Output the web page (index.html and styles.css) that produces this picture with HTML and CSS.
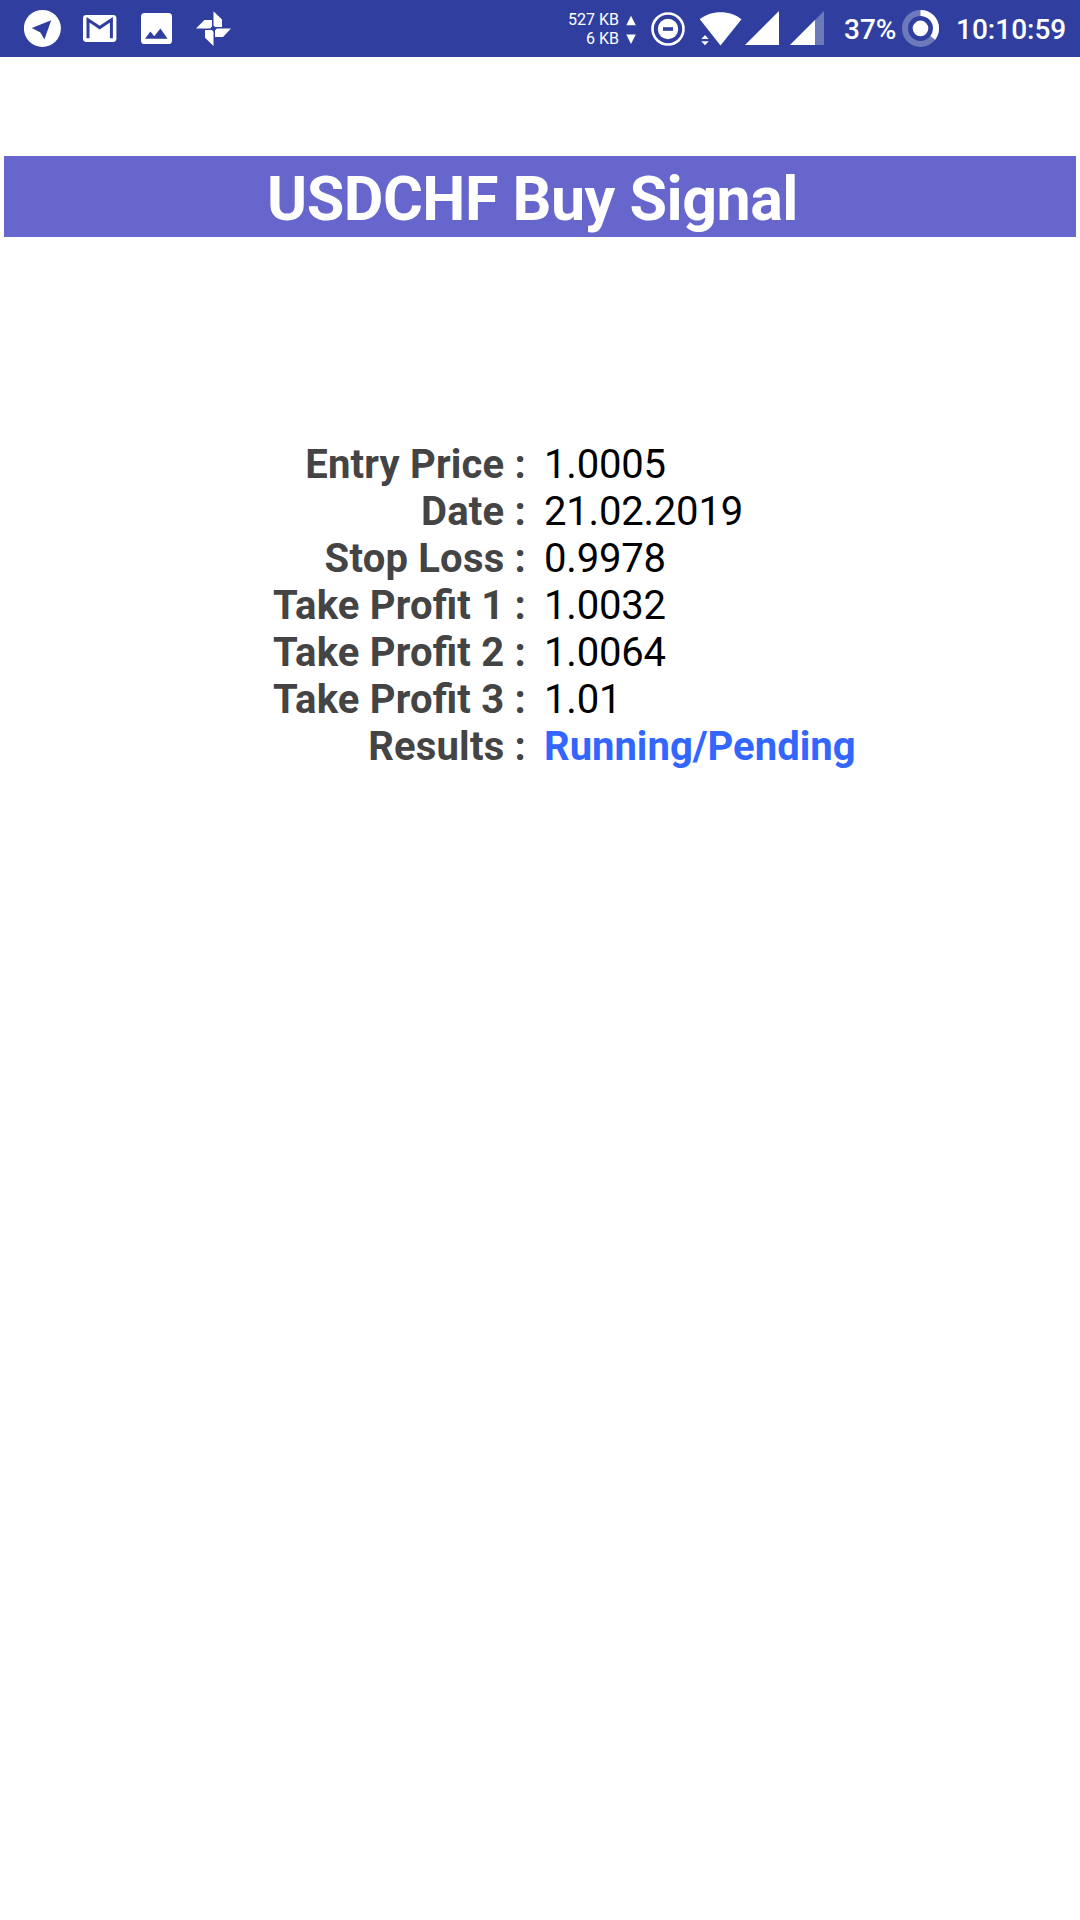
FILE: index.html
```html
<!DOCTYPE html>
<html lang="en">
<head>
    <meta charset="UTF-8">
    <title>USDCHF Buy Signal</title>
    <link rel="stylesheet" href="styles.css">
</head>
<body>
<div class="status-bar">
    <div class="notifications">
        <svg width="38" height="57" viewBox="24 0 38 57">
            <circle cx="42.4" cy="28.4" r="18.5" fill="#fff"/>
            <path d="M31.8 28L51.2 20.3L44.4 39.6L40.4 32.6Z" fill="#303f9f"/>
        </svg>
        <svg width="34" height="57" viewBox="83 0 34 57">
            <rect x="83" y="15" width="33.4" height="27" rx="3.4" fill="#fff"/>
            <path d="M88 38.3V19.8L99.7 27.6L111.4 19.8V38.3" fill="none" stroke="#303f9f" stroke-width="3"/>
        </svg>
        <svg width="31" height="57" viewBox="141 0 31 57">
            <rect x="141" y="13" width="31" height="31" rx="3.6" fill="#fff"/>
            <path d="M145 38.7L150.4 31.6L154.2 36.2L160.4 28.4L167.6 38.7Z" fill="#303f9f"/>
        </svg>
        <svg width="36" height="57" viewBox="196 0 36 57">
            <path d="M213.5 11.3L222 19.5V27H215.2L213.5 25.5ZM231 28.4L223 37H215V30.4L216.8 28.4ZM213.5 46L205 37.7V30H211.7L213.5 31.8ZM196 28.4L204.3 20H212V26.5L210.2 28.4Z" fill="#fff"/>
        </svg>
    </div>
    <div class="indicators">
        <div class="speed">
            <div>527 KB</div>
            <div>6 KB</div>
        </div>
        <svg class="speed-arrows" width="10" height="57" viewBox="626 0 10 57">
            <path d="M626.3 25.2L631 15.8L635.8 25.2ZM626.3 34.6H635.8L631 44Z" fill="#fff"/>
        </svg>
        <svg class="dnd" width="34" height="57" viewBox="651 0 34 57">
            <circle cx="668" cy="29" r="15.5" fill="none" stroke="#fff" stroke-width="2.6"/>
            <circle cx="668" cy="29" r="10.2" fill="#fff"/>
            <path d="M663 27.2H673V30.8H663Z" fill="#303f9f"/>
        </svg>
        <svg class="wifi" width="42" height="57" viewBox="700 0 42 57">
            <path d="M720.5 45.5L699.8 19.2C705.5 14.7 712.5 12.2 720.5 12.2S735.8 14.7 741.5 19.2Z" fill="#fff"/>
            <path d="M701.3 39L705 35L708.7 39ZM701.3 41.2H708.7L705 45.2Z" fill="#fff"/>
        </svg>
        <svg class="signal-one" width="34" height="57" viewBox="745 0 34 57">
            <path d="M745 45L779 11V45Z" fill="#fff"/>
        </svg>
        <svg class="signal-two" width="34" height="57" viewBox="790 0 34 57">
            <path d="M790 45L824 11V45Z" fill="#fff" fill-opacity=".3"/>
            <path d="M790 45L815 20V45Z" fill="#fff"/>
        </svg>
        <div class="percent">37%</div>
        <svg class="battery" width="38" height="57" viewBox="902 0 38 57">
            <circle cx="920.5" cy="28.4" r="15.5" fill="none" stroke="#fff" stroke-opacity=".3" stroke-width="6"/>
            <circle cx="920.5" cy="28.4" r="15.5" fill="none" stroke="#fff" stroke-width="6" pathLength="100" stroke-dasharray="35.5 100" transform="rotate(-90 920.5 28.4)"/>
            <circle cx="920.5" cy="28.4" r="7.8" fill="#fff"/>
        </svg>
        <div class="clock">10:10:59</div>
    </div>
</div>

<h1 class="title">USDCHF Buy Signal</h1>

<dl class="signal">
    <dt>Entry Price :</dt><dd>1.0005</dd>
    <dt>Date :</dt><dd>21.02.2019</dd>
    <dt>Stop Loss :</dt><dd>0.9978</dd>
    <dt>Take Profit 1 :</dt><dd>1.0032</dd>
    <dt>Take Profit 2 :</dt><dd>1.0064</dd>
    <dt>Take Profit 3 :</dt><dd>1.01</dd>
    <dt>Results :</dt><dd class="pending">Running/Pending</dd>
</dl>
</body>
</html>
```

FILE: styles.css
```css
*{
    margin:0;
    padding:0;
    box-sizing:border-box;
}
body{
    background:#fff;
    font-family:Roboto, sans-serif;
}
svg{
    display:block;
    flex:none;
}
.status-bar{
    display:flex;
    justify-content:space-between;
    height:57px;
    padding:0 14px 0 24px;
    background:#303f9f;
    color:#fff;
}
.notifications{
    display:flex;
    gap:24px;
}
.notifications svg:nth-child(2){
    margin-left:-3px;
}
.indicators{
    display:flex;
    align-items:center;
    white-space:nowrap;
}
.speed{
    padding-top:1px;
    font-size:16px;
    line-height:19px;
    text-align:right;
}
.speed-arrows{
    margin-left:7px;
}
.dnd{
    margin-left:15px;
}
.wifi{
    margin-left:15px;
}
.signal-one{
    margin-left:3px;
}
.signal-two{
    margin-left:11px;
}
.percent{
    width:52px;
    margin-left:20px;
    padding-top:2px;
    font-size:28px;
    font-weight:500;
}
.battery{
    margin-left:6px;
}
.clock{
    width:110px;
    margin-left:16px;
    padding-top:2px;
    font-size:28px;
    font-weight:500;
}
.title{
    height:81px;
    margin:99px 4px 0;
    padding-right:15px;
    background:#6666cc;
    color:#fff;
    font-size:61px;
    font-weight:bold;
    letter-spacing:-.5px;
    line-height:86px;
    text-align:center;
}
.signal{
    display:grid;
    grid-template-columns:526px 1fr;
    column-gap:18px;
    margin-top:204px;
    font-size:40px;
    line-height:47px;
}
/* keep the "fi" ligature even though the text is letter-spaced */
.signal dt{
    color:#444;
    font-weight:bold;
    font-feature-settings:"liga" 1;
    letter-spacing:.2px;
    text-align:right;
}
.signal dd{
    color:#000;
    letter-spacing:-.2px;
}
.signal .pending{
    color:#3366ff;
    font-weight:bold;
    letter-spacing:0;
}
```
